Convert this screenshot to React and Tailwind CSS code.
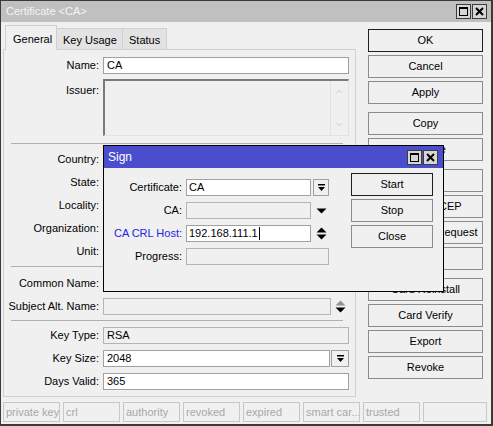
import { ChevronUp, ChevronDown } from "lucide-react";

const DropIcon = () => (
  <svg width="9" height="8" viewBox="0 0 9 8">
    <rect x="1" y="0" width="7" height="1.5" fill="#000" />
    <path d="M1 3h7L4.5 7z" fill="#000" />
  </svg>
);

const DropBtn = ({ w = "w-[18px]" }) => (
  <div className={w + " h-full border border-[#a0a0a0] bg-[#f0f0f0] flex items-center justify-center"}>
    <DropIcon />
  </div>
);

const UpDown = ({ up = "#000" }) => (
  <svg width="11" height="13" viewBox="0 0 11 13">
    <path d="M5.5 0.5L10.5 5.5H0.5z" fill={up} />
    <path d="M0.5 7.5h10L5.5 12.5z" fill="#000" />
  </svg>
);

const WinButtons = () => (
  <div className="flex gap-[1px]">
    <div className="w-[15px] h-[15px] border border-[#3c3c3c] bg-[#d6d6d6] flex items-center justify-center">
      <svg width="9" height="9" viewBox="0 0 9 9">
        <rect x="0.5" y="0.5" width="8" height="8" fill="none" stroke="#000" strokeWidth="1" />
        <rect x="0" y="0" width="9" height="2" fill="#000" />
      </svg>
    </div>
    <div className="w-[15px] h-[15px] border border-[#3c3c3c] bg-[#d6d6d6] flex items-center justify-center">
      <svg width="9" height="9" viewBox="0 0 9 9">
        <path d="M1 1L8 8M8 1L1 8" stroke="#000" strokeWidth="2" />
      </svg>
    </div>
  </div>
);

const Field = ({ label, children, cls = "" }) => (
  <div className={"flex items-center h-[17px] " + cls}>
    <div className="w-[95px] text-right whitespace-nowrap">{label}</div>
    <div className="ml-[4px] flex-1 flex h-full">{children}</div>
  </div>
);

const WhiteBox = ({ text }) => (
  <div className="flex-1 h-full bg-white border border-[#a0a0a0] px-[3px] flex items-center">{text}</div>
);

const GrayBox = ({ text }) => (
  <div className="flex-1 h-full bg-[#f0f0f0] border border-[#b4b4b4] px-[3px] flex items-center">{text}</div>
);

const Sep = ({ cls }) => <div className={"ml-[7px] mr-[6px] border-t border-[#b0b0b0] " + cls} />;

const Btn = ({ label, def, cls = "" }) => (
  <div
    className={
      "w-[115px] h-[23px] flex items-center justify-center bg-[#f0f0f0] border whitespace-nowrap overflow-hidden " +
      (def ? "border-[#1e1e1e]" : "border-[#8c8c8c]") +
      " " +
      cls
    }
  >
    {label}
  </div>
);

const status = ["private key", "crl", "authority", "revoked", "expired", "smart car...", "trusted"];

export default function App() {
  return (
    <div className="relative w-[493px] h-[426px] bg-[#f0f0f0] border-l border-t border-r-2 border-b-2 border-[#3a3a3a] flex flex-col text-[11px] leading-none text-black font-['Liberation_Sans',Arial,sans-serif] overflow-hidden">
      {/* title */}
      <div className="h-[21px] bg-[#c0c0c0] flex items-center justify-between pl-[5px] pr-[4px]">
        <span className="text-[#f4f4f4] text-[11px]">Certificate &lt;CA&gt;</span>
        <WinButtons />
      </div>

      <div className="flex h-[377px]">
        {/* left: tabs + panel */}
        <div className="pl-[2px] pt-[3px] w-[355px] flex flex-col">
          <div className="flex items-end h-[25px] ml-[2px] relative z-10 -mb-px">
            <div className="w-[52px] h-[25px] border border-b-0 border-[#d0d0d0] bg-[#f0f0f0] pl-[7px] pt-[8px]">General</div>
            <div className="w-[66px] h-[22px] border border-l-0 border-[#d0d0d0] bg-[#e3e3e3] pl-[6px] pt-[6px]">Key Usage</div>
            <div className="w-[44px] h-[22px] border border-l-0 border-[#d0d0d0] bg-[#e3e3e3] pl-[6px] pt-[6px]">Status</div>
          </div>
          <div className="h-[348px] border border-[#d0d0d0] pt-[7px] pr-[6px] flex flex-col">
            <Field label="Name:">
              <WhiteBox text="CA" />
            </Field>
            <div className="flex items-start mt-[5px]">
              <div className="w-[95px] text-right pt-[6px]">Issuer:</div>
              <div className="ml-[4px] flex-1 h-[57px] border-l-2 border-t-2 border-l-[#7a7a7a] border-t-[#7a7a7a] border-r border-b border-r-[#e2e2e2] border-b-[#e2e2e2] flex justify-end">
                <div className="w-[18px] h-full border-l border-[#e2e2e2] flex flex-col items-center justify-between py-[5px]">
                  <ChevronUp size={11} color="#c4c4c4" strokeWidth={2} />
                  <ChevronDown size={11} color="#c4c4c4" strokeWidth={2} />
                </div>
              </div>
            </div>
            <Sep cls="mt-[7px]" />
            <div className="flex flex-col gap-[6px] mt-[7px]">
              <Field label="Country:"><GrayBox /></Field>
              <Field label="State:"><GrayBox /></Field>
              <Field label="Locality:"><GrayBox /></Field>
              <Field label="Organization:"><GrayBox /></Field>
              <Field label="Unit:"><GrayBox /></Field>
            </div>
            <Sep cls="mt-[6px]" />
            <div className="flex flex-col gap-[6px] mt-[8px]">
              <Field label="Common Name:"><GrayBox /></Field>
              <Field label="Subject Alt. Name:">
                <GrayBox />
                <div className="w-[18px] flex items-center justify-center">
                  <UpDown up="#8c948c" />
                </div>
              </Field>
            </div>
            <Sep cls="mt-[5px]" />
            <div className="flex flex-col gap-[6px] mt-[6px]">
              <Field label="Key Type:"><GrayBox text="RSA" /></Field>
              <Field label="Key Size:">
                <WhiteBox text="2048" />
                <div className="ml-[1px] h-full flex"><DropBtn /></div>
              </Field>
              <Field label="Days Valid:"><WhiteBox text="365" /></Field>
            </div>
          </div>
        </div>

        {/* right: buttons */}
        <div className="pl-[12px] pt-[7px] flex flex-col gap-[3px]">
          <Btn label="OK" def />
          <Btn label="Cancel" />
          <Btn label="Apply" />
          <Btn label="Copy" cls="mt-[5px]" />
          <Btn label="Remove" />
          <Btn label="Sign" cls="mt-[5px]" />
          <Btn label="Sign via SCEP" />
          <Btn label="Create Cert. Request" />
          <Btn label="Trust" />
          <Btn label="Card Reinstall" cls="mt-[5px]" />
          <Btn label="Card Verify" />
          <Btn label="Export" />
          <Btn label="Revoke" />
        </div>
      </div>

      {/* status bar */}
      <div className="flex gap-[3px] pl-[2px] mt-[3px] text-[#a8a8a8]">
        {status.map((s) => (
          <div key={s} className="w-[57px] h-[20px] border border-[#c8c8c8] pl-[2px] flex items-center whitespace-nowrap overflow-hidden">
            {s}
          </div>
        ))}
        <div className="w-[64px] h-[20px] border border-[#c8c8c8]" />
      </div>

      {/* Sign dialog */}
      <div className="absolute left-[102px] top-[144px] w-[341px] h-[147px] border border-black bg-[#f0f0f0] z-20 flex flex-col">
        <div className="h-[22px] bg-[#4a4dcc] flex items-center justify-between pl-[4px] pr-[5px]">
          <span className="text-white text-[12px]">Sign</span>
          <WinButtons />
        </div>
        <div className="flex">
          <div className="w-[225px] pt-[11px] flex flex-col gap-[6px]">
            <div className="flex items-center h-[17px]">
              <div className="w-[78px] text-right">Certificate:</div>
              <div className="ml-[4px] w-[125px] h-full bg-white border border-[#a0a0a0] px-[2px] flex items-center">CA</div>
              <div className="ml-[2px] h-full flex"><DropBtn w="w-[16px]" /></div>
            </div>
            <div className="flex items-center h-[17px]">
              <div className="w-[78px] text-right">CA:</div>
              <div className="ml-[4px] w-[125px] h-full bg-[#f0f0f0] border border-[#b4b4b4]" />
              <div className="ml-[2px] w-[16px] flex items-center justify-center">
                <svg width="11" height="6" viewBox="0 0 11 6"><path d="M0.5 0.5h10L5.5 5.5z" fill="#000" /></svg>
              </div>
            </div>
            <div className="flex items-center h-[17px]">
              <div className="w-[78px] text-right text-[#2424e6] whitespace-nowrap">CA CRL Host:</div>
              <div className="ml-[4px] w-[125px] h-full bg-white border border-[#a0a0a0] px-[2px] flex items-center">
                192.168.111.1<span className="ml-[1px] w-px h-[13px] bg-black" />
              </div>
              <div className="ml-[2px] w-[16px] flex items-center justify-center">
                <UpDown />
              </div>
            </div>
            <div className="flex items-center h-[17px]">
              <div className="w-[78px] text-right">Progress:</div>
              <div className="ml-[4px] w-[143px] h-full bg-[#f0f0f0] border border-[#b4b4b4]" />
            </div>
          </div>
          <div className="ml-[22px] pt-[5px] flex flex-col gap-[3px]">
            <div className="w-[82px] h-[23px] border border-[#1e1e1e] flex items-center justify-center">Start</div>
            <div className="w-[82px] h-[23px] border border-[#8c8c8c] flex items-center justify-center">Stop</div>
            <div className="w-[82px] h-[23px] border border-[#8c8c8c] flex items-center justify-center">Close</div>
          </div>
        </div>
      </div>
    </div>
  );
}
